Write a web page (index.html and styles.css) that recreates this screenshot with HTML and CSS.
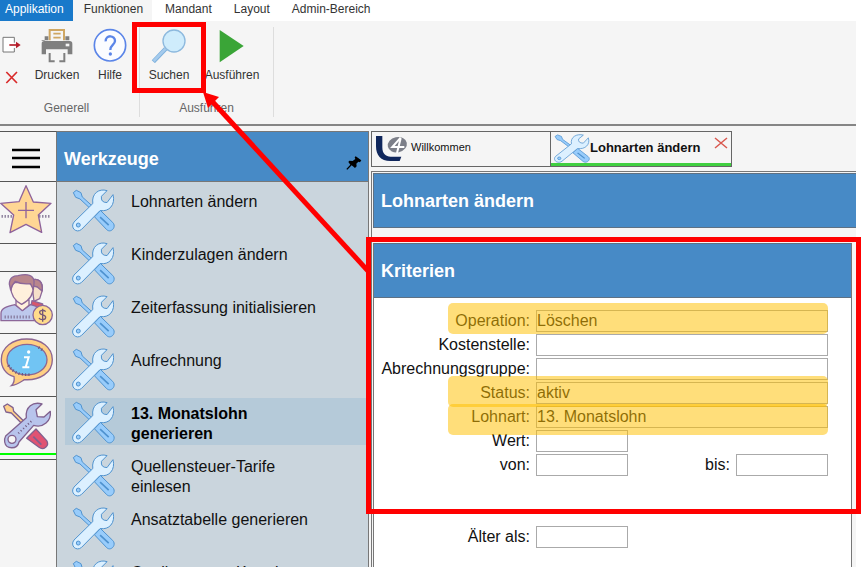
FILE: index.html
```html
<!DOCTYPE html>
<html lang="de">
<head>
<meta charset="utf-8">
<title>Lohnarten ändern</title>
<link rel="stylesheet" href="styles.css">
</head>
<body>
<svg class="defs" aria-hidden="true">
  <symbol id="tools" viewBox="-2 -2 130 130" preserveAspectRatio="none">
    <g stroke="#4f92cf" stroke-width="3" stroke-linejoin="round">
      <path fill="#98ccfb" d="M2 9 L11 2 L25 9 L29 22 L60 50 L53 57 L22 28 L9 23Z"/>
      <path fill="#98ccfb" d="M66 82 L84 63 L121 99 C134 112 116 133 103 121Z"/>
      <path fill="none" d="M83 83 L109 107" stroke-width="5"/>
      <path fill="#dcf0ff" d="M4 98 L61 42 C56 12 80 -5 104 3 L87 20 Q84 39 104 39 L122 15 C130 46 110 68 83 63 L27 120 C11 134 -9 114 4 98Z"/>
      <circle cx="17" cy="107" r="6" fill="#98ccfb"/>
    </g>
  </symbol>
</svg>

<div class="app">
  <nav class="menubar">
    <a class="menu menu-app" href="#">Applikation</a>
    <a class="menu menu-active" href="#">Funktionen</a>
    <a class="menu" href="#">Mandant</a>
    <a class="menu" href="#">Layout</a>
    <a class="menu" href="#">Admin-Bereich</a>
  </nav>

  <header class="ribbon">
    <section class="group group-general">
      <div class="commands">
        <div class="small-commands">
          <button class="mini" aria-label="Verlassen"><svg width="20" height="18" viewBox="0 0 60 54"><path d="M37 20V4H3V48H37V36" fill="#fff" stroke="#777" stroke-width="3"/><path d="M22 27H44" stroke="#b51e2b" stroke-width="5"/><path d="M42 17L56 27L42 37Z" fill="#b51e2b"/></svg></button>
          <button class="mini" aria-label="Schliessen"><svg width="20" height="18" viewBox="0 0 60 54"><path d="M13 12L45 45M45 12L13 45" stroke="#d92a2a" stroke-width="5"/></svg></button>
        </div>
        <button class="command command-print">
          <svg width="36" height="36" viewBox="0 0 108 108"><path d="M32 40V9H75V40" fill="#f5f5f5" stroke="#cfa763" stroke-width="6"/><path d="M43 20H65M43 32H65" stroke="#cfa763" stroke-width="5"/><path d="M17 28H28V40H79V28H91V40H8V50Q8 42 16 42H92Q100 42 100 50V82H86V67H21V82H8V42H17Z" fill="#7f7f7f"/><path d="M80 50H91V58H80Z" fill="#f5f5f5"/><path d="M32 78V103H47M61 103H76V78" fill="none" stroke="#7f7f7f" stroke-width="6"/></svg>
          <span>Drucken</span></button>
        <button class="command command-help">
          <svg width="36" height="36" viewBox="0 0 108 108"><circle cx="54" cy="55" r="47" fill="#fbfcff" stroke="#5b85e8" stroke-width="5"/><path d="M41 43C40 22 70 24 69 42C68 55 55 53 55 69" fill="none" stroke="#5b85e8" stroke-width="7"/><circle cx="55" cy="81" r="5" fill="#5b85e8"/></svg>
          <span>Hilfe</span></button>
      </div>
      <h2 class="group-title">Generell</h2>
    </section>
    <section class="group group-run">
      <div class="commands">
        <button class="command command-search">
          <svg width="36" height="36" viewBox="0 0 108 108"><path d="M44 65L7 104" stroke="#7db0dc" stroke-width="13"/><path d="M44 65L8 102" stroke="#a5cbed" stroke-width="8"/><circle cx="69" cy="42" r="33" fill="#cfecfc" stroke="#8db9de" stroke-width="4"/></svg>
          <span>Suchen</span><i class="mark mark-search"></i></button>
        <button class="command command-run">
          <svg width="36" height="36" viewBox="0 0 108 108"><path d="M17 9L89 57L17 106Z" fill="#3aa537"/></svg>
          <span>Ausführen</span></button>
      </div>
      <h2 class="group-title">Ausführen</h2>
    </section>
  </header>

  <div class="workspace">
    <nav class="rail">
      <button class="rail-cell rail-menu" aria-label="Menü"><svg width="56" height="49" viewBox="0 0 168 147"><path d="M36 54H120M36 78H120M36 105H120" stroke="#000" stroke-width="8"/></svg></button>
      <button class="rail-cell" aria-label="Favoriten"><svg width="56" height="61" viewBox="0 171 168 183"><path d="M5 274H40M118 274H152" stroke="#625078" stroke-width="8" stroke-dasharray="3 6"/><path d="M78 182L100 231L153 235L115 270L125 322L78 298L30 323L41 270L2 235L57 230Z" fill="#ffd694" stroke="#8f639b" stroke-width="4" stroke-linejoin="round"/><path d="M78 231V280M54 256H102" stroke="#8f639b" stroke-width="4"/></svg></button>
      <div class="rail-cell rail-gap"></div>
      <button class="rail-cell" aria-label="Personal"><svg width="56" height="61" viewBox="0 22 168 183"><g stroke="#8c6799" stroke-width="4" stroke-linejoin="round"><path d="M96 108L128 118V140H90Z" fill="#d9566b"/><path d="M94 46C118 40 129 52 127 77L119 102L102 110Z" fill="#f6dfc9"/><path d="M94 47C114 38 130 51 126 79L112 67L96 63Z" fill="#b9868c"/><path d="M3 168V146C3 130 22 125 45 120L67 137L91 120C112 124 130 132 130 168Z" fill="#bdc8ec"/><path d="M48 106V122L67 138L87 122V106Z" fill="#fff0dc"/><path d="M32 63C32 82 38 105 65 119C93 105 101 82 100 63L85 54H44Z" fill="#fff0dc"/><path d="M32 76L28 58C29 36 42 34 54 33C79 27 105 28 102 57L100 74L91 57Q64 60 46 50Q36 60 32 76Z" fill="#b9868c"/><circle cx="128" cy="151" r="29" fill="#ffdb8b"/></g><path d="M14 157H94" stroke="#766486" stroke-width="9" stroke-dasharray="3 6"/><path d="M137 141C132 134 118 136 119 144C120 153 137 148 137 158C137 167 121 167 117 160M128 132V171" fill="none" stroke="#765877" stroke-width="4"/></svg></button>
      <button class="rail-cell rail-info" aria-label="Information"><svg width="56" height="62" viewBox="0 209 168 186"><path d="M80 224C124 224 157 250 157 286C157 325 120 349 73 346C60 354 49 362 34 364C43 356 44 347 42 337C17 330 3 309 4 285C4 250 38 224 80 224Z" fill="#ffcf83" stroke="#8d6692" stroke-width="4"/><ellipse cx="81" cy="286" rx="60" ry="46" fill="#71c4f3" stroke="#8d6692" stroke-width="4"/><path d="M25 303C40 326 61 332 91 331M116 249L130 260" fill="none" stroke="#65537d" stroke-width="8" stroke-dasharray="3 7"/><circle cx="86" cy="263" r="5" fill="#fff"/><path d="M72 279H86L77 309H88M67 309H80" fill="none" stroke="#fff" stroke-width="6"/></svg></button>
      <button class="rail-cell rail-tools" aria-label="Werkzeuge"><svg width="56" height="56" viewBox="0 6 168 168"><g stroke="#80618f" stroke-width="4" stroke-linejoin="round"><path d="M11 34L22 27L39 38L41 49L75 82L69 89L34 54L18 51Z" fill="#ffd18a"/><path d="M80 130L108 102L140 137C150 153 130 167 117 157Z" fill="#e15372"/><path d="M100 125L124 149" stroke-width="5"/><path d="M17 123L79 68C75 36 99 19 126 27L108 44L112 65L132 66L151 49C154 78 130 100 101 91L57 141C52 164 18 164 14 141Q13 130 17 123Z" fill="#b8c4ec"/><circle cx="36" cy="133" r="12" fill="#f5f5f5"/></g><path d="M55 115L99 74" stroke="#6e577e" stroke-width="6" stroke-dasharray="3 7"/></svg></button>
    </nav>

    <aside class="sidebar">
      <header class="sidebar-head"><h1 class="title">Werkzeuge</h1>
        <svg width="16" height="14" viewBox="0 0 48 42"><path d="M29 1L46 13L42 19L37 17L31 23L32 31L27 36L17 28L4 41L1 39L13 26L7 18L10 14L20 15L28 9L26 4Z"/></svg></header>
      <ul class="tool-list">
        <li><a class="tool" href="#"><svg class="tool-icon"><use href="#tools"/></svg><span>Lohnarten ändern</span></a></li>
        <li><a class="tool" href="#"><svg class="tool-icon"><use href="#tools"/></svg><span>Kinderzulagen ändern</span></a></li>
        <li><a class="tool" href="#"><svg class="tool-icon"><use href="#tools"/></svg><span>Zeiterfassung initialisieren</span></a></li>
        <li><a class="tool" href="#"><svg class="tool-icon"><use href="#tools"/></svg><span>Aufrechnung</span></a></li>
        <li><a class="tool tool-active" href="#"><svg class="tool-icon"><use href="#tools"/></svg><span>13. Monatslohn<br>generieren</span></a></li>
        <li><a class="tool" href="#"><svg class="tool-icon"><use href="#tools"/></svg><span>Quellensteuer-Tarife<br>einlesen</span></a></li>
        <li><a class="tool" href="#"><svg class="tool-icon"><use href="#tools"/></svg><span>Ansatztabelle generieren</span></a></li>
        <li><a class="tool" href="#"><svg class="tool-icon"><use href="#tools"/></svg><span>Quellensteuer-Korrektur</span></a></li>
      </ul>
    </aside>

    <main class="main">
      <div class="tabs">
        <button class="tab">
          <svg width="34" height="32" viewBox="0 0 102 96"><path d="M3 9H22V43C22 62 32 71 47 71H79L74 84H46C17 84 3 67 3 40Z" fill="#10275c"/><ellipse cx="67" cy="35" rx="29" ry="23" fill="#7c7f89" transform="rotate(-12 67 35)"/><path d="M77 14L52 42H88M77 16L66 60" fill="none" stroke="#fff" stroke-width="6"/></svg>
          <span>Willkommen</span></button>
        <div class="tab tab-active">
          <svg class="tab-icon"><use href="#tools"/></svg><b>Lohnarten ändern</b>
          <button class="tab-close" aria-label="Tab schliessen"><svg width="14" height="12" viewBox="0 0 14 12"><path d="M1 1L13 11M13 1L1 11" stroke="#d9584f" stroke-width="1.5"/></svg></button>
        </div>
      </div>
      <div class="view">
        <header class="bar"><h2 class="title">Lohnarten ändern</h2></header>
        <section class="criteria">
          <header class="bar"><h3 class="title">Kriterien</h3></header>
          <form class="form">
            <label for="operation">Operation:</label><input class="wide" id="operation" value="Löschen">
            <label for="cost">Kostenstelle:</label><input class="wide" id="cost">
            <label for="billing">Abrechnungsgruppe:</label><input class="wide" id="billing">
            <label for="status">Status:</label><input class="wide" id="status" value="aktiv">
            <label for="wage">Lohnart:</label><input class="wide" id="wage" value="13. Monatslohn">
            <label for="value">Wert:</label><input class="first" id="value">
            <label for="from">von:</label><input class="first" id="from">
            <label for="to">bis:</label><input id="to">
            <label class="age" for="age">Älter als:</label><input class="age" id="age">
            <i class="marker marker-operation"></i>
            <i class="marker marker-status"></i>
            <i class="marker marker-wage"></i>
          </form>
          <i class="mark mark-criteria"></i>
        </section>
      </div>
    </main>
  </div>
</div>
<svg class="arrow" width="170" height="185" viewBox="200 90 170 185" aria-hidden="true"><path d="M369 272L210 99" stroke="#f00" stroke-width="5"/><path d="M203 92L219 97L208 108Z" fill="#f00"/></svg>
</body>
</html>
```
FILE: styles.css
```css
* { box-sizing: border-box; }
html, body { height: 100%; }
body {
  margin: 0;
  overflow: hidden;
  position: relative;
  background: #fff;
  color: #111;
  font-family: "Liberation Sans", Arial, sans-serif;
  font-size: 16px;
}
h1, h2, h3, ul { margin: 0; padding: 0; }
ul { list-style: none; }
a { color: inherit; text-decoration: none; }
button { font: inherit; color: inherit; background: none; border: 0; padding: 0; }
svg { display: block; flex: none; }
.defs { position: absolute; width: 0; height: 0; }

.app {
  display: flex;
  flex-direction: column;
  height: 100%;
  margin-right: 7px;
  background: #f5f5f5;
}

/* Menu bar */
.menubar { display: flex; height: 21px; background: #fff; font-size: 12px; color: #333; }
.menu { padding: 0 11px; line-height: 19px; }
.menu-app { padding: 0 9px 0 5px; background: #1979ca; color: #fff; }
.menu-active { margin-right: 2px; padding: 0 9px 0 11px; background: #f5f5f5; }

/* Ribbon */
.ribbon {
  display: flex;
  height: 105px;
  padding-top: 6px;
  border-bottom: 2px solid #858585;
  font-size: 12px;
  color: #333;
}
.group { height: 90px; border-right: 1px solid #ddd; }
.group-general { width: 140px; }
.group-general .group-title { padding-right: 6px; }
.group-run { width: 134px; }
.commands { display: flex; height: 72px; }
.small-commands { display: flex; flex-direction: column; gap: 14px; width: 24px; padding: 9px 0 0 2px; }
.mini { width: 20px; height: 18px; }
.command {
  display: flex;
  flex-direction: column;
  align-items: center;
  gap: 4px;
  height: 56px;
  line-height: 16px;
}
.command-print { width: 66px; }
.command-help { width: 40px; }
.command-search { position: relative; width: 58px; }
.command-run { width: 68px; }
.group-title { font-size: 12px; font-weight: normal; line-height: 18px; color: #666; text-align: center; }

/* Work area */
.workspace { display: flex; flex: 1; min-height: 0; padding-top: 5px; }
.rail { width: 57px; border-right: 1px solid #777; border-top: 1px solid #555; }
.rail-cell { display: block; width: 100%; height: 62px; border-bottom: 1px solid #555; }
.rail-menu { height: 50px; }
.rail-gap { height: 28px; }
.rail-info { height: 63px; }
.rail-tools { height: 63px; padding-bottom: 4px; }
.rail-tools svg { border-bottom: 2px solid #0f0; height: 58px; }

.sidebar {
  width: 312px;
  overflow: hidden;
  border: solid #777;
  border-width: 1px 1px 0 0;
  background: #cad5dd;
}
.sidebar-head {
  display: flex;
  align-items: center;
  justify-content: space-between;
  height: 50px;
  padding: 4px 6px 0 7px;
  border-bottom: 1px solid #777;
  background: #478ac6;
}
.sidebar-head svg { margin-top: 8px; }
.title { font-size: 18px; line-height: 22px; color: #fff; }
.tool-list { display: flex; flex-direction: column; gap: 6px; padding: 4px 1px 0 8px; }
.tool { display: flex; gap: 16px; height: 47px; padding: 3px 0 0 7px; line-height: 20px; }
.tool span { padding-top: 3px; }
.tool-icon { width: 43px; height: 43px; }
.tool-active { background: #b5cad9; font-weight: bold; color: #000; }

/* Document tabs */
.main { flex: 1; display: flex; flex-direction: column; gap: 4px; min-width: 0; padding-left: 2px; }
.tabs { display: flex; font-size: 11px; }
.tab { display: flex; align-items: center; gap: 2px; width: 180px; height: 36px; padding-left: 3px; border: 1px solid #666; }
.tab span { margin-top: -4px; }
.tab-active { gap: 0; width: 181px; border-left: 0; box-shadow: inset 0 -3px #40cf40; }
.tab-icon { width: 36px; height: 29px; margin-top: -2px; }
.tab-active b { margin-top: -4px; font-size: 13px; }
.tab-close { margin: -12px 3px 0 auto; }

.view {
  display: flex;
  flex: 1;
  flex-direction: column;
  min-height: 0;
  padding: 1px 0 0 1px;
  border: solid #777;
  border-width: 1px 0 0 1px;
  background: #f5f5f5;
}
.bar {
  display: flex;
  align-items: center;
  height: 55px;
  padding-left: 7px;
  border: 1px solid #5e7184;
  border-right: 0;
  background: #478ac6;
}
.criteria {
  position: relative;
  flex: 1;
  margin: 15px 4px 0 0;
  border-right: 1px solid #777;
  border-left: 1px solid #777;
  background: #fff;
}
.criteria .bar { border-left: 0; }

/* Criteria form */
.form {
  position: relative;
  display: grid;
  grid-template-columns: 156px 92px 1fr 92px;
  grid-auto-rows: 22px;
  gap: 2px 6px;
  padding: 12px 23px 0 0;
}
label { line-height: 22px; text-align: right; }
.form input {
  width: 100%;
  height: 22px;
  margin: 0;
  padding: 0;
  border: 1px solid #aaa;
  background: #fff;
  color: #111;
  font: inherit;
}
.form .wide { grid-column: 2 / -1; }
.form .first { grid-column: 2; }
label[for="value"], label[for="from"] { grid-column: 1; }
.age { grid-row: 10; }
label.age { grid-column: 1; }
input.age { grid-column: 2; }

/* Annotations laid over the window */
.marker { position: absolute; left: 74px; right: 23px; height: 31px; border-radius: 5px; background: rgba(255, 192, 0, .52); }
.marker-operation { top: 5px; }
.marker-status { top: 78px; }
.marker-wage { top: 106px; }
.mark { position: absolute; border: 5px solid #f00; }
.mark-search { top: -5px; left: -8px; width: 74px; height: 71px; }
.mark-criteria { top: -6px; left: -8px; right: -10px; height: 277px; }
.arrow { position: absolute; left: 200px; top: 90px; }
```
